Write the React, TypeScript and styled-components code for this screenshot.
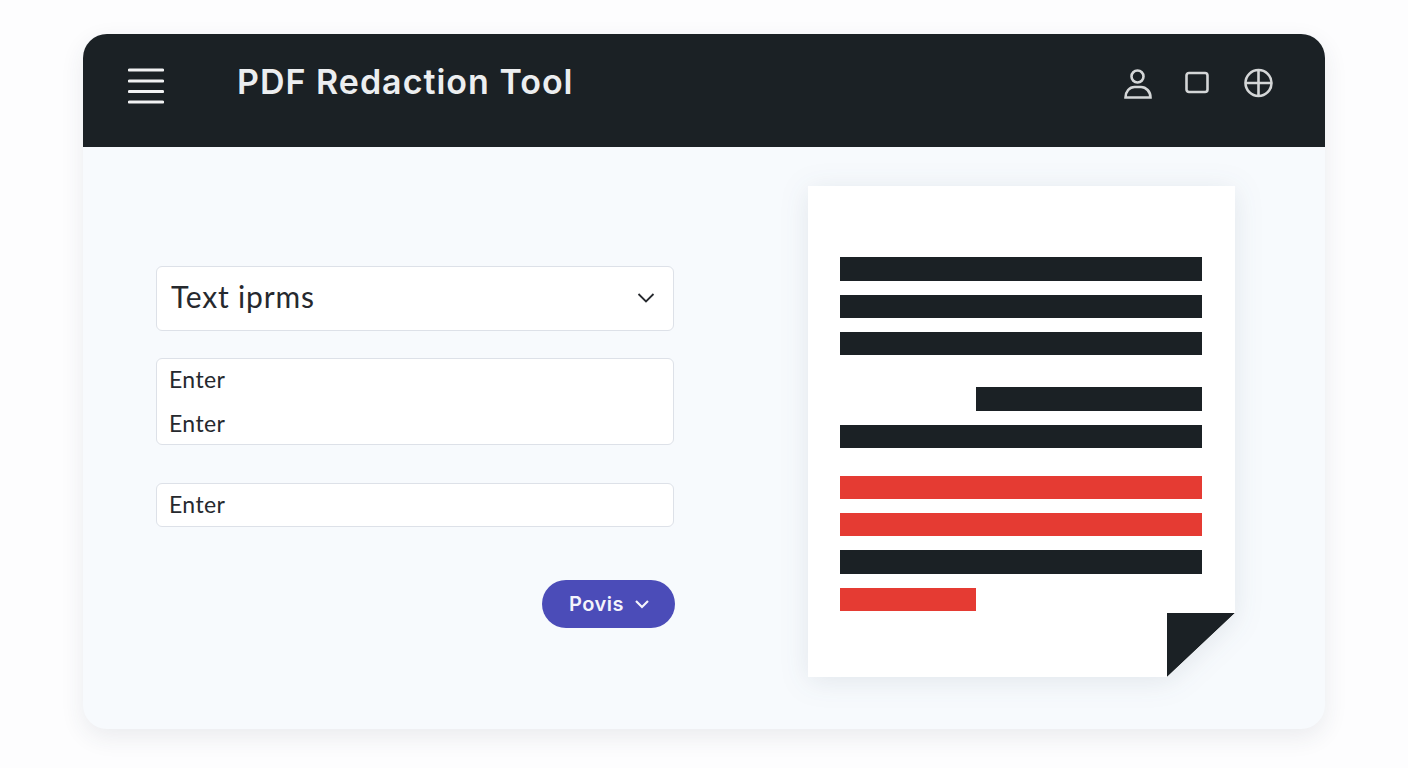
import type { FC } from 'react'
import styled, { createGlobalStyle } from 'styled-components'

const GlobalStyle = createGlobalStyle`
  html, body {
    margin: 0;
    padding: 0;
    background: #fdfdfe;
    font-family: "Lato", "Noto Sans", sans-serif;
  }
`

const INK = '#1b2125'
const RED = '#e53b33'

type Row = { top: number; height: number; width: number; right?: boolean; red?: boolean }

const rows: Row[] = [
  { top: 0, height: 24, width: 362 },
  { top: 14, height: 23, width: 362 },
  { top: 14, height: 23, width: 362 },
  { top: 32, height: 24, width: 226, right: true },
  { top: 14, height: 23, width: 362 },
  { top: 28, height: 23, width: 362, red: true },
  { top: 14, height: 23, width: 362, red: true },
  { top: 14, height: 24, width: 362 },
  { top: 14, height: 23, width: 136, red: true },
]

const App: FC = () => (
  <Page>
    <GlobalStyle />
    <Window>
      <Header>
        <MenuIcon viewBox="0 0 36 36" aria-hidden>
          <path d="M1.500 2h33M1.500 13h33M1.500 23.500h33M1.500 34h33" />
        </MenuIcon>
        <Title>PDF Redaction Tool</Title>
        <HeaderIcons>
          <HeaderIcon viewBox="0 0 30 30" aria-hidden>
            <circle cx="13.500" cy="8.500" r="6" />
            <path d="M1.500 29.500c0-6 4-10.500 9-10.500h6.500c5 0 9.500 4.500 9.500 10.500z" />
          </HeaderIcon>
          <HeaderIcon viewBox="0 0 30 30" aria-hidden>
            <rect x="2.500" y="5" width="21" height="19" rx="2.500" />
          </HeaderIcon>
          <HeaderIcon viewBox="0 0 30 30" aria-hidden>
            <circle cx="14.500" cy="15" r="13" />
            <path d="M14.500 2v26M1.500 15h26" />
          </HeaderIcon>
        </HeaderIcons>
      </Header>
      <Main>
        <Form>
          <SelectBox>
            <SelectLabel>Text iprms</SelectLabel>
            <Chevron viewBox="0 0 20 20" aria-hidden>
              <path d="M2.500 6l7.500 7.500L17.500 6" />
            </Chevron>
          </SelectBox>
          <MultiField>
            <FieldText>Enter</FieldText>
            <FieldText>Enter</FieldText>
          </MultiField>
          <SingleField>
            <FieldText>Enter</FieldText>
          </SingleField>
          <ButtonRow>
            <PrimaryButton type="button">
              Povis
              <ButtonChevron viewBox="0 0 16 16" aria-hidden>
                <path d="M2 5l6 6 6-6" />
              </ButtonChevron>
            </PrimaryButton>
          </ButtonRow>
        </Form>
        <DocShadow>
          <Doc>
            {rows.map((row, i) => (
              <Bar key={i} $top={row.top} $height={row.height} $width={row.width} $right={row.right} $red={row.red} />
            ))}
            <Fold />
          </Doc>
        </DocShadow>
      </Main>
    </Window>
  </Page>
)

const Page = styled.div`
  padding: 34px 83px 39px;
  width: 1408px;
  height: 768px;
  box-sizing: border-box;
  overflow: hidden;
`

const Window = styled.div`
  height: 695px;
  border-radius: 24px;
  background: #f7fafd;
  box-shadow: 0 8px 24px rgba(40, 55, 80, 0.09);
  overflow: hidden;
  display: flex;
  flex-direction: column;
`

const Header = styled.header`
  flex: 0 0 113px;
  box-sizing: border-box;
  display: flex;
  align-items: center;
  padding: 0 51px 15px 45px;
  background: ${INK};
  color: #eceef0;
`

const MenuIcon = styled.svg`
  width: 36px;
  height: 36px;
  flex: none;
  margin-top: 5px;
  fill: none;
  stroke: #f1f2f3;
  stroke-width: 3.200;
  stroke-linecap: round;
`

const Title = styled.h1`
  margin: -3px 0 0 73px;
  font-family: "Inter", "Liberation Sans", sans-serif;
  font-size: 34px;
  font-weight: 600;
  letter-spacing: 1px;
  white-space: nowrap;
`

const HeaderIcons = styled.div`
  margin-left: auto;
  display: flex;
  align-items: center;
  gap: 30px;
`

const HeaderIcon = styled.svg`
  width: 30px;
  height: 30px;
  overflow: visible;
  fill: none;
  stroke: #d4d6d7;
  stroke-width: 2.600;
`

const Main = styled.main`
  flex: 1;
  display: flex;
  align-items: flex-start;
  justify-content: space-between;
  padding: 39px 90px 0 73px;
`

const Form = styled.div`
  width: 518px;
  margin-top: 80px;
  display: flex;
  flex-direction: column;
`

const fieldBox = `
  box-sizing: border-box;
  background: #fff;
  border: 1px solid #dde1e8;
  border-radius: 6px;
  color: #26292e;
`

const SelectBox = styled.div`
  ${fieldBox}
  height: 65px;
  display: flex;
  align-items: center;
  justify-content: space-between;
  padding: 0 17px 0 14px;
`

const SelectLabel = styled.span`
  font-size: 30px;
  letter-spacing: 0.8px;
  line-height: 1;
  margin-top: -5px;
`

const Chevron = styled.svg`
  width: 20px;
  height: 20px;
  margin-top: -2px;
  fill: none;
  stroke: #26292e;
  stroke-width: 1.800;
`

const MultiField = styled.div`
  ${fieldBox}
  height: 87px;
  margin-top: 27px;
  padding: 0 12px 1px;
  display: flex;
  flex-direction: column;
  justify-content: center;
`

const SingleField = styled.div`
  ${fieldBox}
  height: 44px;
  margin-top: 38px;
  padding: 0 12px 2px;
  display: flex;
  align-items: center;
`

const FieldText = styled.div`
  font-size: 23px;
  letter-spacing: 0.4px;
  line-height: 44px;
`

const ButtonRow = styled.div`
  display: flex;
  justify-content: flex-end;
  margin: 53px -1px 0 0;
`

const PrimaryButton = styled.button`
  width: 133px;
  height: 48px;
  border: 0;
  border-radius: 24px;
  background: #4b4cb8;
  color: #f4f4fb;
  font-family: "Inter", "Liberation Sans", sans-serif;
  font-size: 20px;
  font-weight: 600;
  letter-spacing: 0.5px;
  display: flex;
  align-items: center;
  justify-content: center;
  gap: 10px;
  padding: 0 0 0 2px;
`

const ButtonChevron = styled.svg`
  width: 16px;
  height: 16px;
  fill: none;
  stroke: #f4f4fb;
  stroke-width: 2.200;
`

const DocShadow = styled.div`
  filter: drop-shadow(0 4px 14px rgba(40, 55, 80, 0.1));
`

const Doc = styled.div`
  position: relative;
  box-sizing: border-box;
  width: 427px;
  height: 491px;
  padding: 71px 33px 0 32px;
  background: #fff;
  clip-path: polygon(0 0, 100% 0, 100% 427px, 359px 100%, 0 100%);
  display: flex;
  flex-direction: column;
`

const Bar = styled.div<{ $top: number; $height: number; $width: number; $right?: boolean; $red?: boolean }>`
  flex: none;
  margin-top: ${(p) => p.$top}px;
  height: ${(p) => p.$height}px;
  width: ${(p) => p.$width}px;
  align-self: ${(p) => (p.$right ? 'flex-end' : 'flex-start')};
  background: ${(p) => (p.$red ? RED : INK)};
`

const Fold = styled.div`
  position: absolute;
  left: 359px;
  top: 427px;
  width: 68px;
  height: 64px;
  background: ${INK};
  clip-path: polygon(0 0, 100% 0, 0 100%);
`

export default App
